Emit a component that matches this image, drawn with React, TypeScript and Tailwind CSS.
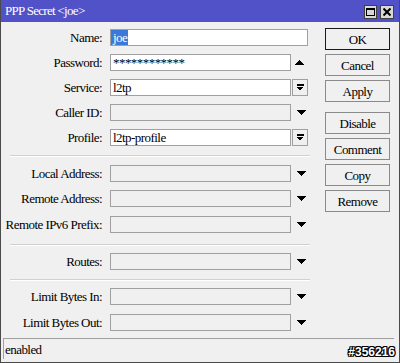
import React from "react";

const UpArrow = () => (
  <svg width="9" height="5" viewBox="0 0 9 5" shapeRendering="crispEdges">
    <polygon points="4.5,0 9,5 0,5" fill="#000" />
  </svg>
);

const DownArrow = () => (
  <svg width="10" height="5" viewBox="0 0 10 5" shapeRendering="crispEdges">
    <polygon points="0,0 10,0 5,5" fill="#000" />
  </svg>
);

const BoxIcon = () => (
  <svg width="8" height="8" viewBox="0 0 8 8" shapeRendering="crispEdges">
    <rect x="0.5" y="0" width="7" height="1.5" fill="#000" />
    <polygon points="0.5,3 7.5,3 4,7" fill="#000" />
  </svg>
);

type Kind = "full" | "up" | "box" | "down";

function Row({
  label,
  kind,
  value,
  white,
  mt,
  selected,
}: {
  label: string;
  kind: Kind;
  value?: string;
  white?: boolean;
  mt: string;
  selected?: boolean;
}) {
  return (
    <div className={`flex items-center h-[17px] ${mt}`}>
      <div className="w-[102px] shrink-0 text-right pr-[1px] leading-none">{label}</div>
      <div
        className={`ml-[7px] h-[17px] border border-[#a0a0a0] flex items-center leading-none overflow-hidden ${
          kind === "full" ? "w-[198px]" : "w-[181px]"
        } ${white ? "bg-white" : "bg-[#f0f0f0]"}`}
      >
        {selected ? (
          <span className="bg-[#3c78d8] text-white h-[15px] flex items-center pl-[2px] pr-[1px]">{value}</span>
        ) : (
          <span className="pl-[2px]">{value}</span>
        )}
      </div>
      {kind === "up" && (
        <div className="w-[17px] flex justify-center">
          <UpArrow />
        </div>
      )}
      {kind === "down" && (
        <div className="w-[17px] flex justify-center pl-[2px]">
          <DownArrow />
        </div>
      )}
      {kind === "box" && (
        <div className="ml-[1px] w-[16px] h-[17px] border border-[#a0a0a0] bg-[#f0f0f0] flex items-center justify-center">
          <BoxIcon />
        </div>
      )}
    </div>
  );
}

const Sep = ({ mt, mb }: { mt: string; mb: string }) => (
  <div className={`ml-[9px] w-[300px] h-[2px] border-t border-[#d0d0d0] border-b border-b-white ${mt} ${mb}`} />
);

function Btn({ label, def, mt }: { label: string; def?: boolean; mt: string }) {
  return (
    <div
      className={`w-[65px] h-[22px] flex items-center justify-center leading-none ${mt} ${
        def ? "border border-[#1a1a1a]" : "border border-[#8a8a8a]"
      } bg-[#f0f0f0]`}
    >
      {label}
    </div>
  );
}

export default function App() {
  return (
    <div className="w-[400px] h-[363px] bg-[#f0f0f0] border-x border-b border-[#4a4a4a] flex flex-col text-[13px] tracking-[-0.55px] text-black [font-family:'Liberation_Serif',serif] overflow-hidden">
      <div className="h-[22px] shrink-0 bg-[#5252c8] flex items-center relative">
        <span className="text-white pl-[4px] tracking-[-0.7px]">PPP Secret &lt;joe&gt;</span>
        <div className="absolute left-[363px] top-[5px] w-[13px] h-[14px] bg-[#d8d8d8] border border-[#404040] flex items-center justify-center">
          <div className="w-[9px] h-[8px] border border-black border-t-2" />
        </div>
        <div className="absolute left-[379px] top-[5px] w-[14px] h-[14px] bg-[#d8d8d8] border border-[#404040] flex items-center justify-center">
          <svg width="8" height="8" viewBox="0 0 8 8">
            <path d="M0.5 0.5 L7.5 7.5 M7.5 0.5 L0.5 7.5" stroke="#000" strokeWidth="2" />
          </svg>
        </div>
      </div>
      <div className="flex">
        <div className="w-[307px] shrink-0 pt-[7px] flex flex-col">
          <Row label="Name:" kind="full" value="joe" white selected mt="" />
          <Row label="Password:" kind="up" value="************" white mt="mt-[8px]" />
          <Row label="Service:" kind="box" value="l2tp" white mt="mt-[8px]" />
          <Row label="Caller ID:" kind="down" mt="mt-[8px]" />
          <Row label="Profile:" kind="box" value="l2tp-profile" white mt="mt-[8px]" />
          <Sep mt="mt-[9px]" mb="mb-[8px]" />
          <Row label="Local Address:" kind="down" mt="" />
          <Row label="Remote Address:" kind="down" mt="mt-[8px]" />
          <Row label="Remote IPv6 Prefix:" kind="down" mt="mt-[9px]" />
          <Sep mt="mt-[11px]" mb="mb-[7px]" />
          <Row label="Routes:" kind="down" mt="" />
          <Sep mt="mt-[9px]" mb="mb-[7px]" />
          <Row label="Limit Bytes In:" kind="down" mt="" />
          <Row label="Limit Bytes Out:" kind="down" mt="mt-[9px]" />
        </div>
        <div className="ml-[17px] pt-[6px] flex flex-col">
          <Btn label="OK" def mt="" />
          <Btn label="Cancel" mt="mt-[4px]" />
          <Btn label="Apply" mt="mt-[4px]" />
          <Btn label="Disable" mt="mt-[10px]" />
          <Btn label="Comment" mt="mt-[4px]" />
          <Btn label="Copy" mt="mt-[4px]" />
          <Btn label="Remove" mt="mt-[4px]" />
        </div>
      </div>
      <div className="relative mt-[7px] ml-[2px] w-[391px] h-[21px] border-t border-l border-[#a0a0a0] flex items-center">
        <span className="pl-[1px] leading-none">enabled</span>
        <span className="absolute right-[-1px] bottom-[1px] text-[12px] font-bold tracking-[0px] text-white leading-none [font-family:'Liberation_Sans',sans-serif] [text-shadow:1px_0_0_#000,-1px_0_0_#000,0_1px_0_#000,0_-1px_0_#000,1px_1px_0_#000,-1px_-1px_0_#000,1px_-1px_0_#000,-1px_1px_0_#000]">
          #356216
        </span>
      </div>
    </div>
  );
}
